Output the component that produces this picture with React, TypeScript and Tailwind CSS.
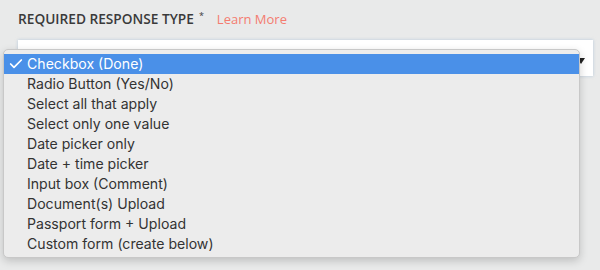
import { Check } from "lucide-react";

const options = [
  "Checkbox (Done)",
  "Radio Button (Yes/No)",
  "Select all that apply",
  "Select only one value",
  "Date picker only",
  "Date + time picker",
  "Input box (Comment)",
  "Document(s) Upload",
  "Passport form + Upload",
  "Custom form (create below)",
];

export default function App() {
  return (
    <div className="w-[600px] h-[270px] bg-[#e9eaea] relative overflow-hidden">
      {/* Field */}
      <div className="pl-[18px] pr-[7px] pt-[11px]">
        <div className="flex items-center h-[17px]">
          <span className="text-[13.7px] font-semibold text-[#3a3a3a] font-['Open_Sans',sans-serif]">
            REQUIRED RESPONSE TYPE
          </span>
          <span className="text-[9px] text-[#3a3a3a] ml-[5px] -mt-[8px] font-['Open_Sans',sans-serif]">*</span>
          <span className="ml-[13px] text-[13px] text-[#f47c70] font-['Open_Sans',sans-serif]">Learn More</span>
        </div>
        <div className="mt-[12px] h-[36px] bg-white shadow-[0_0_3px_rgba(150,180,210,0.6)] relative">
          <div className="absolute right-[8px] top-[18px] w-0 h-0 border-l-[4px] border-r-[4px] border-t-[6px] border-l-transparent border-r-transparent border-t-[#222]" />
        </div>
      </div>

      {/* Native select menu */}
      <div className="absolute left-[3px] top-[49px] w-[577px] h-[209px] rounded-[5px] bg-[#ececec] border border-[#c8c8c8] shadow-[0_3px_8px_rgba(0,0,0,0.18)] py-[4px] font-['Inter',sans-serif]">
        {options.map((o, i) => (
          <div
            key={o}
            className={`h-[20px] flex items-center text-[14.1px] leading-none ${
              i === 0 ? "bg-[#4a90e8] text-white" : "text-[#333]"
            }`}
          >
            <span className="w-[23px] flex justify-end pr-[3px]">
              {i === 0 && <Check size={16} strokeWidth={2.6} className="text-white" />}
            </span>
            <span>{o}</span>
          </div>
        ))}
      </div>
    </div>
  );
}
